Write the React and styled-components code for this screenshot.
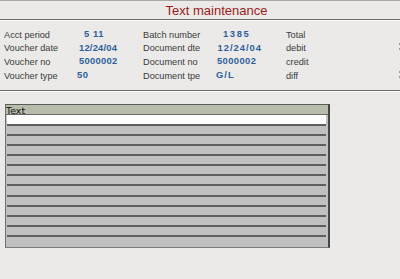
import React from "react";
import styled, { createGlobalStyle } from "styled-components";

const GlobalStyle = createGlobalStyle`
  html, body {
    margin: 0;
    padding: 0;
    background: #ebeae8;
  }
  body {
    font-family: "Liberation Sans", Arial, sans-serif;
    overflow: hidden;
  }
`;

const header = [
  [
    { label: "Acct period", value: "5 11", indent: 7, spread: 0.6 },
    { label: "Batch number", value: "1385", indent: 7, spread: 1.6 },
    { label: "Total" },
  ],
  [
    { label: "Voucher date", value: "12/24/04", indent: 2, spread: 0.2 },
    { label: "Document dte", value: "12/24/04", indent: 1.5, spread: 1 },
    { label: "debit", mark: true },
  ],
  [
    { label: "Voucher no", value: "5000002", indent: 2, spread: 0.3 },
    { label: "Document no", value: "5000002", indent: 1, spread: 0.4 },
    { label: "credit" },
  ],
  [
    { label: "Voucher type", value: "50", indent: 0, spread: 0.6 },
    { label: "Document tpe", value: "G/L", indent: 0, spread: 1 },
    { label: "diff", mark: true },
  ],
];

const textRows = Array.from({ length: 13 }, (_, i) => i);

// text maintenance screen
const App = () => {
  return (
    <>
      <GlobalStyle />
      <Screen>
        <TitleBar>
          <Title>Text maintenance</Title>
        </TitleBar>

        <InfoPanel>
          {header.map((row, r) => (
            <InfoRow key={r}>
              {row.map((cell, c) => (
                <React.Fragment key={c}>
                  <Label>{cell.label}</Label>
                  {c < 2 && (
                    <Value $indent={cell.indent} $spread={cell.spread}>
                      {cell.value}
                    </Value>
                  )}
                </React.Fragment>
              ))}
              <EdgeMark $show={row[2].mark} />
            </InfoRow>
          ))}
        </InfoPanel>

        <TextGrid>
          <GridHeader>Text</GridHeader>
          <GridBody>
            {textRows.map((i) => (
              <GridRow key={i} $active={i === 0} $last={i === textRows.length - 1} />
            ))}
          </GridBody>
        </TextGrid>
      </Screen>
    </>
  );
};

const Screen = styled.div`
  width: 400px;
  height: 279px;
  border-top: 1px solid #a9a9a4;
  box-sizing: border-box;
  display: flex;
  flex-direction: column;
`;

const TitleBar = styled.div`
  height: 18px;
  display: flex;
  align-items: center;
  justify-content: center;
  padding-left: 33px;
  border-bottom: 1px solid #6c6c6c;
  box-shadow: 0 1px 0 #fbfbfa;
`;

const Title = styled.div`
  font-size: 13px;
  color: #9b1a1a;
  line-height: 1;
  margin-top: 1px;
`;

const InfoPanel = styled.div`
  padding: 8px 0 8px 4px;
  display: flex;
  flex-direction: column;
  border-bottom: 1px solid #6c6c6c;
  box-shadow: 0 1px 0 #fbfbfa;
`;

const InfoRow = styled.div`
  display: grid;
  grid-template-columns: 73px 66px 73px 70px 112px 2px;
  height: 13.6px;
  align-items: center;
`;

const Label = styled.div`
  font-size: 9.2px;
  color: #3a3a3a;
  white-space: nowrap;
`;

const Value = styled.div`
  font-size: 9.4px;
  font-weight: bold;
  color: #2f5e9c;
  white-space: nowrap;
  padding-left: ${(p) => p.$indent}px;
  letter-spacing: ${(p) => p.$spread}px;
  margin-top: -2px;
`;

const EdgeMark = styled.div`
  width: 2px;
  height: 7px;
  visibility: ${(p) => (p.$show ? "visible" : "hidden")};
  background: linear-gradient(
    #9a9a9a 0 2px,
    transparent 2px 5px,
    #9a9a9a 5px 7px
  );
  margin-top: -3px;
  margin-left: 1px;
`;

const TextGrid = styled.div`
  margin: 13px 0 0 5px;
  width: 322px;
  border-top: 1px solid #5c5c5c;
  border-left: 1px solid #707070;
  border-right: 2px solid #454545;
  border-bottom: 1px solid #7a7a7a;
  background: #c0c0c0;
`;

const GridHeader = styled.div`
  height: 9px;
  line-height: 11px;
  background: #b8bcaa;
  font-family: "DejaVu Sans", Verdana, sans-serif;
  font-size: 9.5px;
  color: #111;
  border-bottom: 1px solid #6a6a6a;
  overflow: hidden;
`;

const GridBody = styled.div`
  height: 132px;
  display: grid;
  grid-template-rows: repeat(13, 1fr);
  padding: 0 2px 0 1px;
`;

const GridRow = styled.div`
  background: ${(p) => (p.$active ? "#ffffff" : "#c0c0c0")};
  border-bottom: ${(p) => (p.$last ? "none" : "2px solid #5e5e5e")};
`;

export default App;
